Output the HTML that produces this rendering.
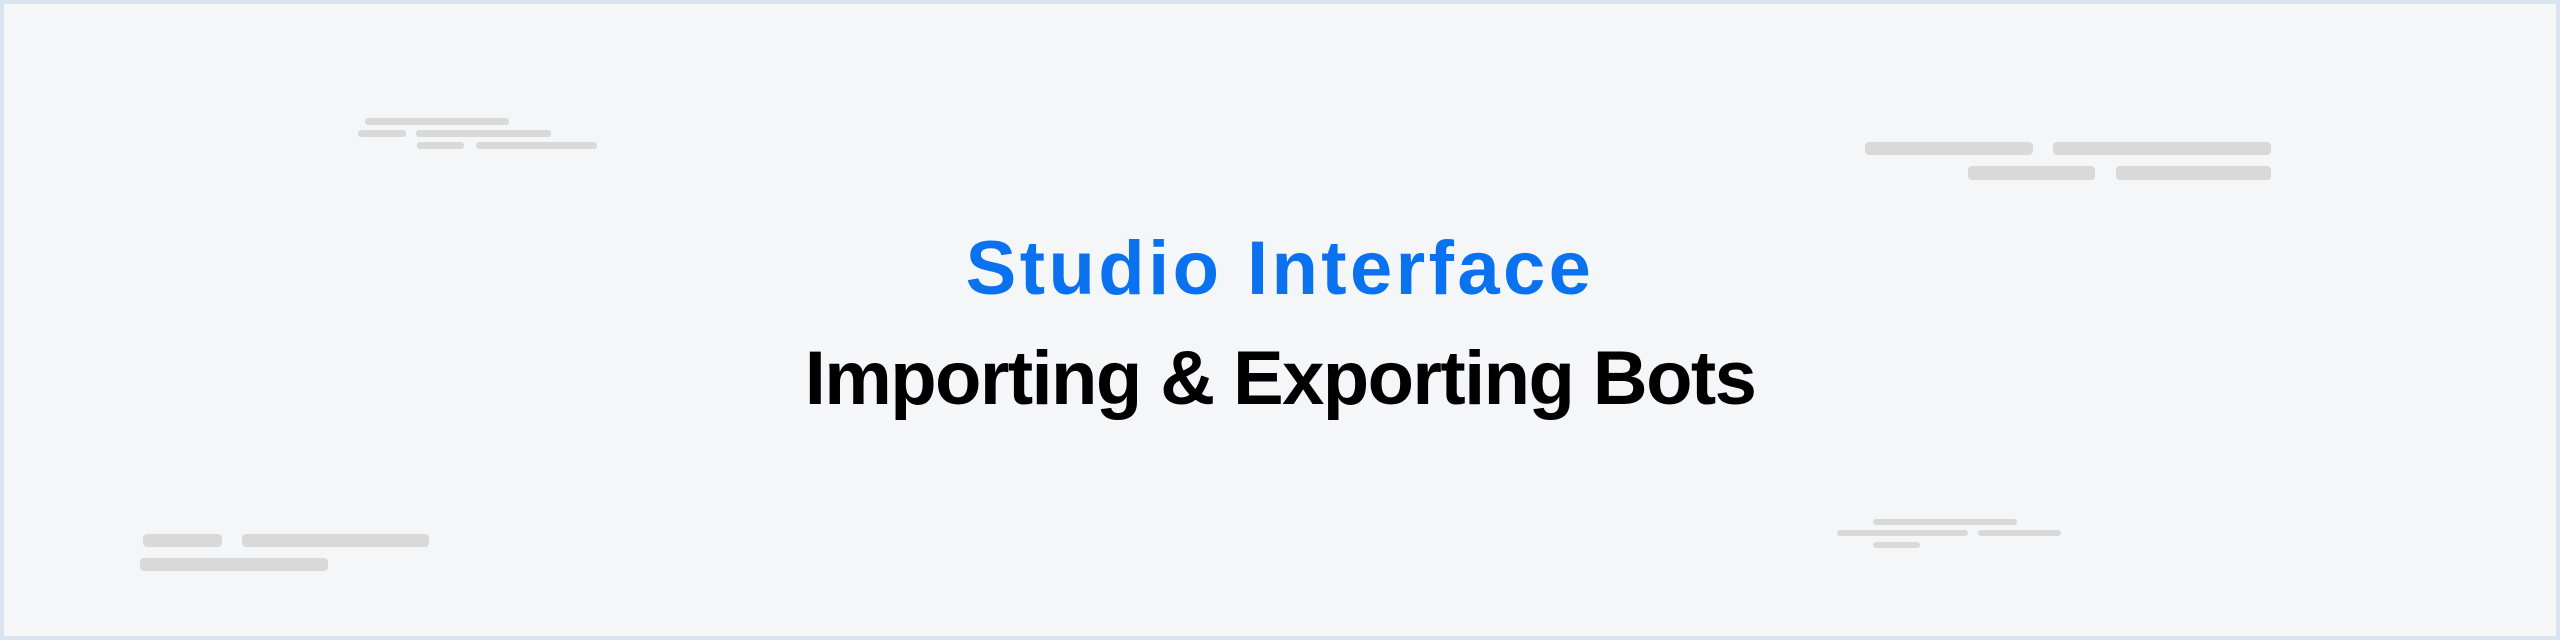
<!DOCTYPE html>
<html><head><meta charset="utf-8"><style>
html,body{margin:0;padding:0}
body{width:2560px;height:640px;position:relative;overflow:hidden;background:#f5f6f8;font-family:"Liberation Sans",sans-serif}
.frame{position:absolute;inset:0;border:4px solid #dce3f0;box-sizing:border-box}
.b{position:absolute;background:#d9d9d9;border-radius:3px}
.t{position:absolute;left:0;width:2560px;text-align:center;font-weight:bold;font-size:76px;line-height:1;white-space:nowrap}
</style></head><body>
<div class="frame"></div>
<div class="b" style="left:365px;top:118px;width:144px;height:7px"></div>
<div class="b" style="left:358px;top:130px;width:48px;height:7px"></div>
<div class="b" style="left:416px;top:130px;width:135px;height:7px"></div>
<div class="b" style="left:417px;top:142px;width:47px;height:7px"></div>
<div class="b" style="left:476px;top:142px;width:121px;height:7px"></div>

<div class="b" style="left:1865px;top:142px;width:168px;height:13px;border-radius:4px"></div>
<div class="b" style="left:2053px;top:142px;width:218px;height:13px;border-radius:4px"></div>
<div class="b" style="left:1968px;top:166px;width:127px;height:14px;border-radius:4px"></div>
<div class="b" style="left:2116px;top:166px;width:155px;height:14px;border-radius:4px"></div>

<div class="b" style="left:143px;top:534px;width:79px;height:13px;border-radius:4px"></div>
<div class="b" style="left:242px;top:534px;width:187px;height:13px;border-radius:4px"></div>
<div class="b" style="left:140px;top:558px;width:188px;height:13px;border-radius:4px"></div>

<div class="b" style="left:1873px;top:519px;width:144px;height:6px"></div>
<div class="b" style="left:1837px;top:530px;width:131px;height:6px"></div>
<div class="b" style="left:1978px;top:530px;width:83px;height:6px"></div>
<div class="b" style="left:1873px;top:542px;width:47px;height:6px"></div>

<div class="t" style="top:231px;color:#0a72ef;letter-spacing:3.4px">Studio Interface</div>
<div class="t" style="top:341px;color:#000;letter-spacing:-1.6px">Importing &amp; Exporting Bots</div>
</body></html>
